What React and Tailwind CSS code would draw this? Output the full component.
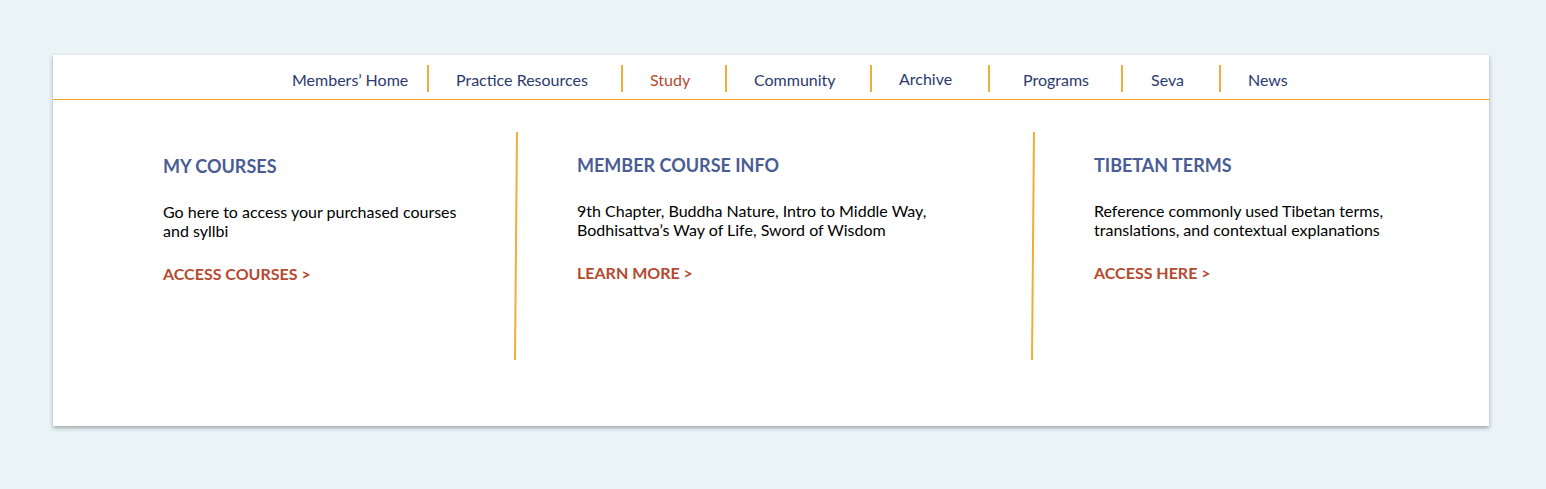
const navItems = [
  { label: "Members’ Home", box: "w-[135px] pl-0 translate-y-px" },
  { label: "Practice Resources", box: "w-[192px] pl-[27px] translate-y-px" },
  { label: "Study", box: "w-[102px] pl-[27px] translate-y-px", active: true },
  { label: "Community", box: "w-[143px] pl-[27px] translate-y-px" },
  { label: "Archive", box: "w-[116px] pl-[27px]" },
  { label: "Programs", box: "w-[131px] pl-[33px] translate-y-px" },
  { label: "Seva", box: "w-[96px] pl-[28px] translate-y-px" },
  { label: "News", box: "w-[96px] pl-[27px] translate-y-px" },
];

const columns = [
  {
    title: "MY COURSES",
    body: "Go here to access your purchased courses and syllbi",
    link: "ACCESS COURSES >",
    box: "w-[352px]",
    text: "w-[310px]",
  },
  {
    title: "MEMBER COURSE INFO",
    body: "9th Chapter, Buddha Nature, Intro to Middle Way, Bodhisattva’s Way of Life, Sword of Wisdom",
    link: "LEARN MORE >",
    box: "w-[515px] pl-[60px] -mt-px",
    text: "w-[380px]",
  },
  {
    title: "TIBETAN TERMS",
    body: "Reference commonly used Tibetan terms, translations, and contextual explanations",
    link: "ACCESS HERE >",
    box: "flex-1 pl-[60px] -mt-px",
    text: "w-[310px]",
  },
];

function Divider() {
  return <div className="h-[228px] w-[2px] shrink-0 rotate-[0.5deg] bg-[#f2ac3c]" />;
}

export default function App() {
  return (
    <div
      className="min-h-screen bg-[#eaf3f6] pt-[55px]"
      style={{ fontFamily: "Lato, 'Open Sans', sans-serif" }}
    >
      <div className="ml-[53px] h-[371px] w-[1436px] bg-white shadow-[0_2px_4px_rgba(60,70,75,0.45)]">
        <nav className="flex pb-[7px] pl-[239px] pt-[10px]">
          {navItems.map((item, i) => (
            <div key={item.label} className="flex">
              {i > 0 && <div className="h-[27px] w-[2px] bg-[#f2ac3c]" />}
              <div
                className={`flex h-[27px] items-center text-[16px] ${item.box} ${
                  item.active ? "text-[#b54a30]" : "text-[#2b3a6d]"
                }`}
              >
                {item.label}
              </div>
            </div>
          ))}
        </nav>
        <div className="h-px bg-[#f0a422]" />

        <div className="flex pl-[110px] pt-[32px]">
          {columns.map((col, i) => (
            <div key={col.title} className="flex">
              {i > 0 && <Divider />}
              <div className={col.box}>
                <h3 className="mt-[22px] text-[18px] font-bold leading-[24px] text-[#4a5c94]">
                  {col.title}
                </h3>
                <p className={`mt-[24px] text-[16px] leading-[19px] text-black ${col.text}`}>
                  {col.body}
                </p>
                <a className="mt-[24px] block text-[16px] font-bold leading-[20px] text-[#b54a30]">
                  {col.link}
                </a>
              </div>
            </div>
          ))}
        </div>
      </div>
    </div>
  );
}
